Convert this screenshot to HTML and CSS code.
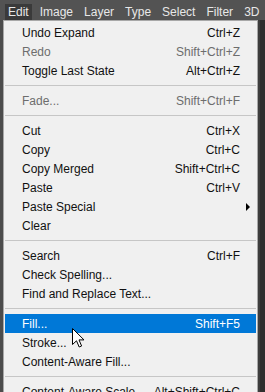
FILE: index.html
```html
<!DOCTYPE html>
<html>
<head>
<meta charset="utf-8">
<link rel="stylesheet" href="styles.css">
</head>
<body>
<div class="menubar">
  <span class="mb-item active">Edit</span>
  <span class="mb-item">Image</span>
  <span class="mb-item">Layer</span>
  <span class="mb-item">Type</span>
  <span class="mb-item">Select</span>
  <span class="mb-item">Filter</span>
  <span class="mb-item">3D</span>
</div>
<div class="stage">
  <div class="edge-left"></div>
  <div class="panel">
    <div class="item"><span class="label">Undo Expand</span><span class="key">Ctrl+Z</span><span class="sub"></span></div>
    <div class="item disabled"><span class="label">Redo</span><span class="key">Shift+Ctrl+Z</span><span class="sub"></span></div>
    <div class="item"><span class="label">Toggle Last State</span><span class="key">Alt+Ctrl+Z</span><span class="sub"></span></div>
    <div class="sep"></div>
    <div class="item disabled"><span class="label">Fade...</span><span class="key">Shift+Ctrl+F</span><span class="sub"></span></div>
    <div class="sep"></div>
    <div class="item"><span class="label">Cut</span><span class="key">Ctrl+X</span><span class="sub"></span></div>
    <div class="item"><span class="label">Copy</span><span class="key">Ctrl+C</span><span class="sub"></span></div>
    <div class="item"><span class="label">Copy Merged</span><span class="key">Shift+Ctrl+C</span><span class="sub"></span></div>
    <div class="item"><span class="label">Paste</span><span class="key">Ctrl+V</span><span class="sub"></span></div>
    <div class="item"><span class="label">Paste Special</span><span class="key"></span><span class="sub"><span class="arrow"></span></span></div>
    <div class="item"><span class="label">Clear</span><span class="key"></span><span class="sub"></span></div>
    <div class="sep"></div>
    <div class="item"><span class="label">Search</span><span class="key">Ctrl+F</span><span class="sub"></span></div>
    <div class="item"><span class="label">Check Spelling...</span><span class="key"></span><span class="sub"></span></div>
    <div class="item"><span class="label">Find and Replace Text...</span><span class="key"></span><span class="sub"></span></div>
    <div class="sep"></div>
    <div class="item hover"><span class="label">Fill...</span><span class="key">Shift+F5</span><span class="sub"></span></div>
    <div class="item"><span class="label">Stroke...</span><span class="key"></span><span class="sub"></span></div>
    <div class="item"><span class="label">Content-Aware Fill...</span><span class="key"></span><span class="sub"></span></div>
    <div class="sep"></div>
    <div class="item"><span class="label">Content-Aware Scale</span><span class="key">Alt+Shift+Ctrl+C</span><span class="sub"></span></div>
  </div>
  <div class="edge-right"></div>
</div>
<svg class="cursor" width="13" height="21" viewBox="0 0 13 21" xmlns="http://www.w3.org/2000/svg">
  <path d="M0.5 0.5 L0.5 16.5 L4.5 12.8 L7.2 19 L9.6 18 L7 11.9 L12 11.9 Z" fill="#ffffff" stroke="#000000" stroke-width="1" stroke-linejoin="miter"/>
</svg>
</body>
</html>
```
FILE: styles.css
```css
html, body {
  margin: 0;
  padding: 0;
}
body {
  width: 265px;
  height: 392px;
  overflow: hidden;
  background: #535353;
  font-family: "Liberation Sans", Arial, sans-serif;
  position: relative;
}
.menubar {
  height: 20px;
  display: flex;
  align-items: stretch;
  padding-left: 5px;
  color: #e8e8e8;
  font-size: 12px;
  box-sizing: border-box;
  padding-top: 4px;
  white-space: nowrap;
}
.mb-item {
  padding: 0 3px;
  line-height: 16px;
  margin-right: 5px;
}
.mb-item.active {
  background: #3a3a3a;
}
.stage {
  display: flex;
  height: 372px;
}
.edge-left {
  width: 3px;
  background: #4c4c4c;
}
.edge-right {
  flex: 1;
  background: linear-gradient(to right, #3d3d3d 0, #3d3d3d 2px, #2e2e2e 2px);
}
.panel {
  width: 253px;
  background: #f0f0f0;
  border: 1px solid #a8a8a8;
  border-bottom: 0;
  padding-top: 2px;
  font-size: 12px;
  color: #111;
}
.item {
  height: 19px;
  margin: 0 1px;
  display: flex;
  align-items: center;
  padding-left: 17px;
}
.item .label {
  flex: 1;
  white-space: nowrap;
}
.item .key {
  white-space: nowrap;
  text-align: right;
}
.item .sub {
  width: 16px;
  flex: none;
  display: flex;
  align-items: center;
  padding-left: 6px;
  box-sizing: border-box;
}
.arrow {
  width: 0;
  height: 0;
  border-top: 4px solid transparent;
  border-bottom: 4px solid transparent;
  border-left: 4px solid #000;
}
.item.disabled {
  color: #6d6d6d;
}
.item.hover {
  background: #0078d7;
  color: #fff;
}
.sep {
  height: 11px;
  margin: 0 1px;
  display: flex;
  align-items: center;
}
.sep::before {
  content: "";
  display: block;
  height: 1px;
  width: 100%;
  background: #c6c6c6;
}
.cursor {
  position: absolute;
  left: 72px;
  top: 328px;
}
```
